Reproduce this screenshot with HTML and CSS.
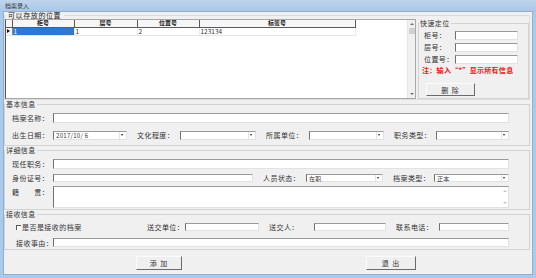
FILE: index.html
```html
<!DOCTYPE html>
<html>

<head>
  <meta charset="utf-8">
  <title>档案录入</title>
  <link rel="stylesheet" href="styles.css">
</head>

<body>
  <div class="window">
    <div class="titlebar">档案录入</div>
    <div class="client">

      <fieldset class="group top">
        <legend>可以存放的位置</legend>
        <div class="top-body">
          <div class="grid">
            <div class="grid-area">
              <table class="cells">
                <colgroup>
                  <col class="col-rh">
                  <col class="col-1">
                  <col class="col-2">
                  <col class="col-3">
                  <col class="col-4">
                </colgroup>
                <tr class="head">
                  <td></td>
                  <td>柜号</td>
                  <td>层号</td>
                  <td>位置号</td>
                  <td>标签号</td>
                </tr>
                <tr class="data">
                  <td class="rh"><span class="mark"></span></td>
                  <td class="sel">1</td>
                  <td>1</td>
                  <td>2</td>
                  <td>123134</td>
                </tr>
              </table>
            </div>
            <div class="vscroll">
              <span class="sb-btn"><span class="tri-up"></span></span>
              <span class="thumb"></span>
              <span class="sb-fill"></span>
              <span class="sb-btn"><span class="tri-down"></span></span>
            </div>
          </div>

          <fieldset class="group quick">
            <legend>快速定位</legend>
            <div class="qrows">
              <div class="qrow"><span class="qlabel">柜号：</span><span class="box qbox"></span></div>
              <div class="qrow"><span class="qlabel">层号：</span><span class="box qbox"></span></div>
              <div class="qrow"><span class="qlabel">位置号：</span><span class="box qbox"></span></div>
            </div>
            <div class="note">注：输入“*”显示所有信息</div>
            <button class="btn del">删 除</button>
          </fieldset>
        </div>
      </fieldset>

      <fieldset class="group basic">
        <legend>基本信息</legend>
        <div class="row basic-1">
          <span class="lbl">档案名称：</span>
          <span class="box tall"></span>
        </div>
        <div class="row basic-2">
          <span class="lbl">出生日期：</span>
          <span class="box combo"><span class="val">2017/10/ 6</span><span class="drop"></span></span>
          <span class="lbl after">文化程度：</span>
          <span class="box combo"><span class="val"></span><span class="drop"></span></span>
          <span class="lbl after">所属单位：</span>
          <span class="box combo"><span class="val"></span><span class="drop"></span></span>
          <span class="lbl after">职务类型：</span>
          <span class="box combo"><span class="val"></span><span class="drop"></span></span>
        </div>
      </fieldset>

      <fieldset class="group detail">
        <legend>详细信息</legend>
        <div class="row detail-1">
          <span class="lbl">现任职务：</span>
          <span class="box tall"></span>
        </div>
        <div class="row detail-2">
          <span class="lbl">身份证号：</span>
          <span class="box short"></span>
          <span class="lbl after">人员状态：</span>
          <span class="box combo short"><span class="val">在职</span><span class="drop"></span></span>
          <span class="lbl after">档案类型：</span>
          <span class="box combo short"><span class="val">正本</span><span class="drop"></span></span>
        </div>
        <div class="row detail-3">
          <span class="lbl">籍　　贯：</span>
          <span class="box area"><span class="area-bar"><span class="tri-up light"></span><span class="tri-down light"></span></span></span>
        </div>
      </fieldset>

      <fieldset class="group recv">
        <legend>接收信息</legend>
        <div class="row recv-1">
          <span class="lbl check-lbl"><span class="check"></span>是否是接收的档案</span>
          <span class="lbl">送交单位：</span>
          <span class="box short"></span>
          <span class="lbl after">送交人：</span>
          <span class="box short"></span>
          <span class="lbl after">联系电话：</span>
          <span class="box short"></span>
        </div>
        <div class="row recv-2">
          <span class="lbl indent">接收事由：</span>
          <span class="box"></span>
        </div>
      </fieldset>

      <div class="actions">
        <button class="btn add">添 加</button>
        <button class="btn quit">退 出</button>
      </div>

    </div>
  </div>
</body>

</html>
```

FILE: styles.css
```css
* {
  box-sizing: border-box;
}

body {
  margin: 0;
  font-family: "Noto Sans CJK SC", "Noto Sans", sans-serif;
  font-size: 7px;
  color: #333;
}

.window {
  width: 536px;
  height: 278px;
  padding: 0 4px 4px;
  background: #abc9e9;
}

.titlebar {
  height: 12px;
  margin: 0 -4px;
  padding-left: 5px;
  line-height: 12px;
  font-size: 6px;
  color: #3a3a3a;
  background: linear-gradient(#bed5ee, #a8c6e6);
}

.client {
  height: 262px;
  background: #f0f0f0;
  box-shadow: 0 0 0 1px #8eb0d4;
}

/* group boxes */

.group {
  width: 526px;
  margin: 0;
  padding: 0;
  min-width: 0;
  border: 1px solid #d2d2d2;
}

.group legend {
  margin: 0;
  padding: 0 1px;
  line-height: 8px;
  font-size: 7px;
  letter-spacing: 0.4px;
}

.top {
  height: 88px;
  border-color: #dcdcdc;
}

.top > legend {
  padding: 0 3px;
  line-height: 7px;
  font-size: 7px;
  letter-spacing: 0.6px;
  color: #222;
}

.top-body {
  display: flex;
  height: 80px;
}

/* data grid */

.grid {
  display: flex;
  width: 411px;
  height: 80px;
  background: #fff;
  border: 1px solid #a8a8a8;
  border-left-color: #555;
}

.grid-area {
  flex: 1;
}

.cells {
  border-collapse: collapse;
  table-layout: fixed;
  width: 349px;
}

.col-rh { width: 6px; }
.col-1 { width: 62px; }
.col-2 { width: 63px; }
.col-3 { width: 62px; }
.col-4 { width: 156px; }

.cells td {
  padding: 0 1px;
  height: 8px;
  line-height: 7px;
  font-size: 6.5px;
  white-space: nowrap;
}

.cells .head td {
  height: 7px;
  line-height: 6px;
  font-size: 6px;
  text-align: center;
  font-weight: bold;
  color: #222;
  background: #f6f6f6;
  border-right: 1px solid #5a5a5a;
  border-bottom: 1px solid #5a5a5a;
}

.cells .data td {
  border-bottom: 1px solid #e4e4e4;
  border-right: 1px solid #ededed;
}

.cells .data .rh {
  background: #f6f6f6;
  border-right: 1px solid #8a8a8a;
}

.mark {
  display: block;
  width: 0;
  height: 0;
  border-left: 3px solid #111;
  border-top: 2px solid transparent;
  border-bottom: 2px solid transparent;
}

.cells .data .sel {
  background: #2c78d4;
  color: #fff;
}

.vscroll {
  display: flex;
  flex-direction: column;
  align-items: center;
  width: 8px;
  background: #f0f0f0;
  border-left: 1px solid #e6e6e6;
}

.sb-btn {
  display: flex;
  align-items: center;
  justify-content: center;
  width: 100%;
  height: 8px;
}

.thumb {
  width: 6px;
  height: 6px;
  background: #d0d0d0;
}

.sb-fill {
  flex: 1;
}

.tri-up,
.tri-down {
  width: 0;
  height: 0;
  border-left: 2px solid transparent;
  border-right: 2px solid transparent;
}

.tri-up {
  border-bottom: 2px solid #707070;
}

.tri-down {
  border-top: 2px solid #707070;
}

.tri-up.light {
  border-bottom-color: #c4c4c4;
}

.tri-down.light {
  border-top-color: #c4c4c4;
}

/* quick locate */

.quick {
  width: 111px;
  height: 80px;
  margin-left: 2px;
}

.qrows {
  padding: 2px 0 0 5px;
}

.qrow {
  display: flex;
  align-items: center;
  height: 12px;
}

.qlabel {
  width: 31px;
  letter-spacing: 0.4px;
}

.qbox {
  width: 63px;
  height: 9px;
}

.note {
  height: 10px;
  padding-left: 3px;
  line-height: 10px;
  font-weight: bold;
  color: #f01010;
  letter-spacing: 0.3px;
  white-space: nowrap;
}

.btn {
  display: block;
  padding: 0;
  font-family: inherit;
  font-size: 7px;
  color: #333;
  background: #efefef;
  border: 1px solid;
  border-color: #fbfbfb #6a6a6a #6a6a6a #fbfbfb;
  letter-spacing: 1px;
}

.del {
  width: 49px;
  height: 13px;
  margin: 8px 0 0 7px;
}

/* form rows */

.row {
  display: grid;
  align-items: center;
  padding-left: 7px;
}

.lbl {
  letter-spacing: 0.45px;
  white-space: nowrap;
}

.lbl.after {
  padding-left: 10px;
}

.lbl.indent {
  padding-left: 4px;
}

.box {
  display: block;
  height: 9px;
  background: #fff;
  border: 1px solid;
  border-color: #9a9a9a #e2e2e2 #e2e2e2 #707070;
}

.box.tall {
  height: 10px;
}

.box.short {
  height: 8px;
}

.combo {
  display: flex;
  align-items: center;
}

.combo .val {
  flex: 1;
  padding-left: 2px;
  font-size: 6px;
  line-height: 7px;
  letter-spacing: 0.3px;
  white-space: nowrap;
  overflow: hidden;
}

.drop {
  position: relative;
  width: 6px;
  height: 100%;
  margin-right: 1px;
  border-left: 1px solid #e4e4e4;
}

.drop::after {
  content: "";
  position: absolute;
  left: 1px;
  top: 2px;
  border-left: 1.5px solid transparent;
  border-right: 1.5px solid transparent;
  border-top: 2px solid #222;
}

.basic {
  height: 46px;
}

.basic-1 {
  grid-template-columns: 41px 456px;
  height: 20px;
}

.basic-2 {
  grid-template-columns: 41px 74px 53px 76px 53px 75px 52px 73px;
  height: 14px;
}

.detail {
  height: 64px;
}

.detail-1 {
  grid-template-columns: 41px 456px;
  height: 19px;
}

.detail-2 {
  grid-template-columns: 41px 200px 53px 77px 51px 75px;
  height: 10px;
}

.detail-3 {
  grid-template-columns: 41px 456px;
  align-items: start;
  margin-top: 3px;
  height: 22px;
}

.detail-3 .lbl {
  padding-top: 1px;
}

.area {
  display: flex;
  justify-content: flex-end;
  height: 22px;
}

.area-bar {
  display: flex;
  flex-direction: column;
  justify-content: space-between;
  align-items: center;
  width: 6px;
  padding: 3px 0;
}

.recv {
  height: 40px;
}

.recv-1 {
  grid-template-columns: 135px 38px 74px 55px 72px 53px 70px;
  height: 18px;
}

.recv-2 {
  grid-template-columns: 41px 456px;
  height: 13px;
}

.check-lbl {
  display: flex;
  align-items: center;
  padding-left: 4px;
}

.check {
  width: 5px;
  height: 5px;
  margin-right: 1px;
  background: #fff;
  border-top: 1px solid #555;
  border-left: 1px solid #555;
}

/* bottom buttons */

.actions {
  display: flex;
  padding-top: 6px;
}

.add {
  width: 46px;
  height: 14px;
  margin-left: 132px;
}

.quit {
  width: 50px;
  height: 14px;
  margin-left: 184px;
}
```
